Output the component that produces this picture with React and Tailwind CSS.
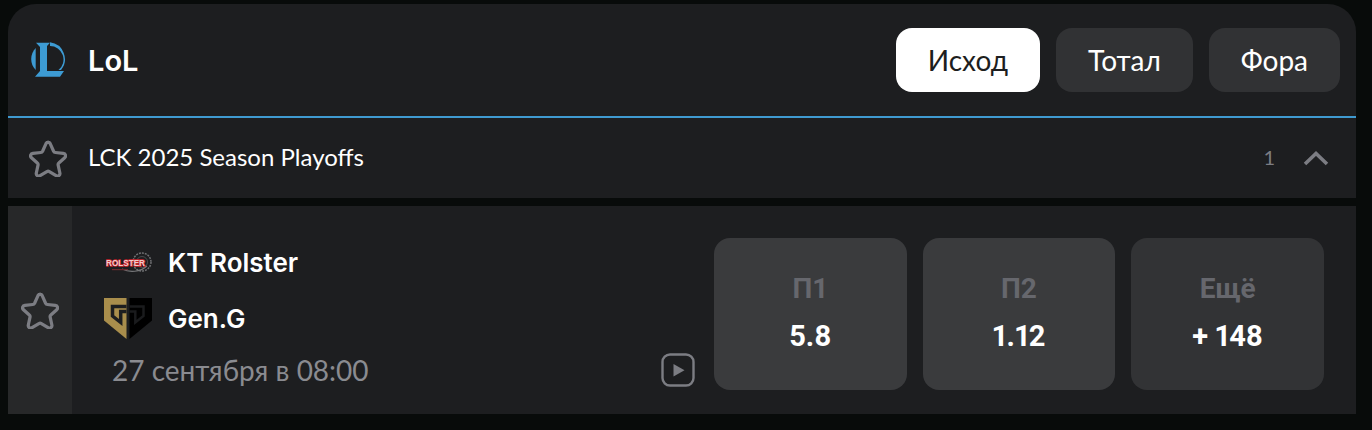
const Star = () => (
  <svg width="38" height="38" viewBox="0 0 40 40" fill="none" stroke="#7c7d83" strokeWidth="3.400" strokeLinejoin="round" strokeLinecap="round">
    <path d="M20 3.200c1 0 1.800.6 2.300 1.600l3.600 8.100c.4.8 1 1.200 1.900 1.300l8.300.9c2.400.3 3.300 3 1.500 4.600l-6.200 5.600c-.7.600-.9 1.300-.7 2.200l1.800 8.300c.5 2.300-1.900 4-3.900 2.800l-7.200-4.300c-.9-.5-1.700-.5-2.600 0l-7.200 4.300c-2 1.200-4.400-.5-3.900-2.800l1.800-8.300c.2-.9 0-1.600-.7-2.200l-6.200-5.600c-1.800-1.600-.9-4.300 1.500-4.600l8.300-.9c.9-.1 1.500-.5 1.900-1.300l3.600-8.100c.5-1 1.300-1.600 2.300-1.600z" />
  </svg>
);

const LolLogo = () => (
  <svg width="36" height="36" viewBox="0 0 36 36" fill="#3d9bd3">
    <path d="M6 .7H20L17 4V29H34L30 34.700H5L10 29V5z" />
    <path d="M5.700 6C-.3 12-.3 22 5.700 28z" />
    <path d="M20 .3A17 17 0 0 1 31 28H28.500A13.500 13.500 0 0 0 20 4z" />
  </svg>
);

const KtLogo = () => (
  <svg width="48" height="24" viewBox="0 0 48 24">
    <circle cx="38" cy="11" r="9" fill="none" stroke="#6f7072" strokeWidth="1.500" strokeDasharray="2 1" />
    <circle cx="38" cy="11" r="5.500" fill="none" stroke="#4a4b4d" strokeWidth="1" />
    <path d="M18 18c8 4 18 3 25-3" stroke="#77787a" strokeWidth="1.200" fill="none" />
    <text x="2" y="15" fontFamily="'Liberation Sans',sans-serif" fontWeight="700" fontSize="9" textLength="39" lengthAdjust="spacingAndGlyphs" fill="#f0cccc" stroke="#c8242c" strokeWidth="1.400" paintOrder="stroke">ROLSTER</text>
    <rect x="8" y="18" width="16" height="1.200" fill="#6a2a2e" />
  </svg>
);

const GenLogo = () => (
  <svg width="48" height="42" viewBox="0 0 48 42" fill="none">
    <path fill="#a98e4c" d="M0 0H22.500V41L0 22.500z" />
    <path fill="#000" d="M25.500 0H48V22.500L25.500 41z" />
    <path stroke="#1d1e20" strokeWidth="3.500" d="M22.500 8.500H8.500V18L16.700 24.500V13.500H22.500" />
    <path stroke="#1a1b1d" strokeWidth="2.500" d="M25.500 8.500H39.500V18L31.300 24.500V13.500H25.500" />
  </svg>
);

const Play = () => (
  <svg width="34" height="34" viewBox="0 0 34 34" fill="none">
    <rect x="1.500" y="1.500" width="31" height="31" rx="7.500" stroke="#7c7d83" strokeWidth="2.400" />
    <path d="M12.500 11V23.500L23.500 17.200z" fill="#7c7d83" />
  </svg>
);

const Tab = ({ label, active }) => (
  <button className={`h-16 px-8 rounded-2xl text-[28px] ${active ? "bg-white text-[#1d1e20]" : "bg-[#313234] text-white"}`}>
    {label}
  </button>
);

const Odd = ({ label, value, light }) => (
  <button className={`flex-1 h-[152px] rounded-2xl flex flex-col items-center justify-center gap-[13px] pb-[2px] font-['Roboto',sans-serif] ${light ? "bg-[#3a3b3d]" : "bg-[#323335]"}`}>
    <span className="text-[28px] leading-8 font-bold text-[#66676d]">{label}</span>
    <span className="text-[29px] leading-9 font-bold text-white proportional-nums">{value}</span>
  </button>
);

const Team = ({ logo, name }) => (
  <div className="flex items-center h-12">
    <div className="w-12 flex justify-center">{logo}</div>
    <span className="ml-4 text-[26px] font-semibold text-white font-['Inter',sans-serif]">{name}</span>
  </div>
);

export default function App() {
  return (
    <div className="h-[430px] bg-[#080b0a] pl-2 pr-4 pt-1 font-['Lato',sans-serif]">
      <header className="h-28 rounded-t-[28px] bg-[#1d1e20] flex items-center pl-[22px] pr-4">
        <LolLogo />
        <span className="ml-[22px] pt-0.5 text-[29px] font-semibold text-white font-['Inter',sans-serif]">LoL</span>
        <div className="ml-auto flex gap-4">
          <Tab label="Исход" active />
          <Tab label="Тотал" />
          <Tab label="Фора" />
        </div>
      </header>
      <div className="h-0.5 bg-[#3f9ad0]" />
      <div className="h-20 bg-[#1d1e20] flex items-center pl-[21px] pr-[27px]">
        <Star />
        <span className="ml-[21px] pb-0.5 text-2xl text-white">LCK 2025 Season Playoffs</span>
        <span className="ml-auto pb-0.5 text-xl text-[#7c7d83]">1</span>
        <svg className="ml-7" width="26" height="16" viewBox="0 0 26 16" fill="none" stroke="#7c7d83" strokeWidth="3.600">
          <path d="M2 14L13 3.500L24 14" />
        </svg>
      </div>
      <div className="mt-2 h-52 bg-[#1d1e20] flex">
        <div className="w-16 bg-[#272829] flex items-center justify-center">
          <Star />
        </div>
        <div className="flex-1 flex items-center pl-8 pr-8">
          <div className="flex-1 flex flex-col pt-[6px]">
            <Team logo={<KtLogo />} name="KT Rolster" />
            <div className="h-2" />
            <Team logo={<GenLogo />} name="Gen.G" />
            <div className="flex items-center justify-between mt-[9px]">
              <span className="ml-2 text-[28px] leading-9 text-[#8a8b90]">27 сентября в 08:00</span>
              <span className="mr-[19px]"><Play /></span>
            </div>
          </div>
          <div className="w-[610px] flex gap-4 mt-2">
            <Odd label="П1" value="5.8" light />
            <Odd label="П2" value="1.12" light />
            <Odd label="Ещё" value="+ 148" />
          </div>
        </div>
      </div>
    </div>
  );
}
